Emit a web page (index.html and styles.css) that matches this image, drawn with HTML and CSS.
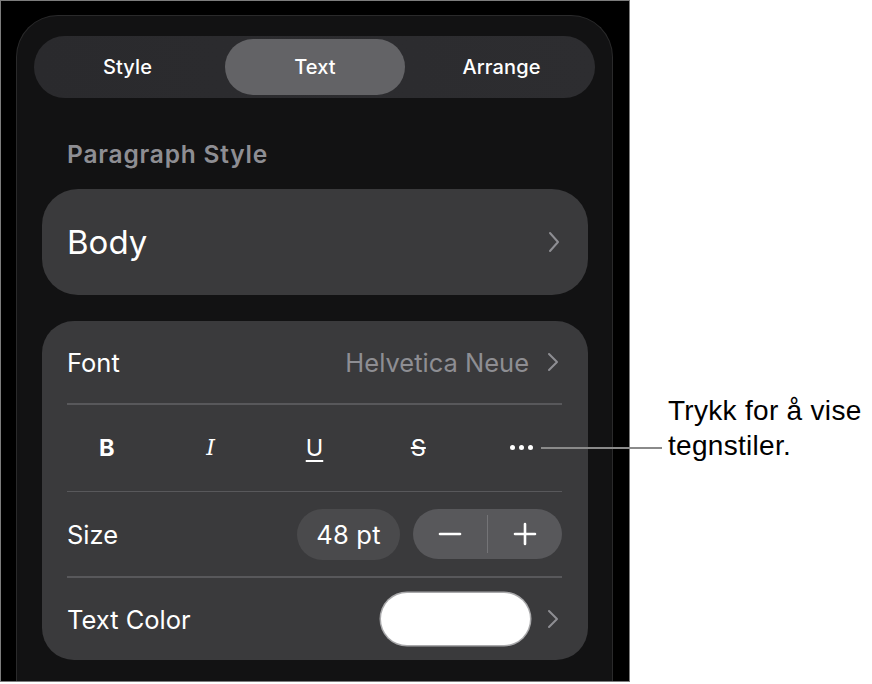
FILE: index.html
```html
<!DOCTYPE html>
<html lang="nb">
<head>
<meta charset="utf-8">
<title>Text format</title>
<link rel="stylesheet" href="styles.css">
</head>
<body>
<div class="stage">
  <div class="frame">
    <div class="panel">
      <div class="segmented">
        <div class="seg">Style</div>
        <div class="seg seg-active">Text</div>
        <div class="seg">Arrange</div>
      </div>

      <div class="section-title">Paragraph Style</div>

      <div class="card card-body">
        <span class="body-label">Body</span>
        <svg class="chev chev-lg" viewBox="0 0 12 22" width="12" height="22"><path d="M2 2 L10 11 L2 20"/></svg>
      </div>

      <div class="card card-list">
        <div class="row row-font">
          <span class="label">Font</span>
          <span class="value">Helvetica Neue</span>
          <svg class="chev" viewBox="0 0 12 20" width="12" height="20"><path d="M2 2 L10 10 L2 18"/></svg>
        </div>
        <div class="sep"></div>
        <div class="row row-styles">
          <span class="sty sty-b">B</span>
          <span class="sty sty-i">I</span>
          <span class="sty sty-u">U</span>
          <span class="sty sty-s">S</span>
          <span class="sty sty-more"><i></i><i></i><i></i></span>
        </div>
        <div class="sep"></div>
        <div class="row row-size">
          <span class="label">Size</span>
          <span class="size-pill">48 pt</span>
          <div class="stepper">
            <span class="step">
              <svg viewBox="0 0 24 24" width="24" height="24"><path d="M2 12 H22"/></svg>
            </span>
            <span class="step-div"></span>
            <span class="step">
              <svg viewBox="0 0 24 24" width="24" height="24"><path d="M2 12 H22 M12 2 V22"/></svg>
            </span>
          </div>
        </div>
        <div class="sep"></div>
        <div class="row row-color">
          <span class="label">Text Color</span>
          <span class="swatch"></span>
          <svg class="chev" viewBox="0 0 12 20" width="12" height="20"><path d="M2 2 L10 10 L2 18"/></svg>
        </div>
      </div>
    </div>
  </div>

  <div class="callout">
    <span class="callout-line"></span>
    <p class="callout-text">Trykk for å vise<br>tegnstiler.</p>
  </div>
</div>
</body>
</html>
```

FILE: styles.css
```css
* { box-sizing: border-box; }

html, body {
  margin: 0;
  padding: 0;
  background: #ffffff;
}

body {
  font-family: Inter, "Noto Sans", sans-serif;
  -webkit-font-smoothing: antialiased;
}

.stage {
  position: relative;
  width: 872px;
  height: 684px;
}

.frame {
  width: 630px;
  height: 682px;
  border: 1px solid #7c7c7c;
  background: #000000;
  padding: 14px 16px 0 15px;
  overflow: hidden;
}

.panel {
  width: 597px;
  height: 680px;
  background: #121213;
  border: 1px solid #2a2a2b;
  border-bottom: none;
  border-radius: 42px 42px 0 0;
  padding: 20px 17px 0 17px;
}

/* segmented control */
.segmented {
  display: grid;
  grid-template-columns: repeat(3, 1fr);
  height: 62px;
  padding: 3px 0;
  border-radius: 31px;
  background: linear-gradient(90deg, #2a2a2d 0%, #2d2d30 100%);
}

.seg {
  display: flex;
  align-items: center;
  justify-content: center;
  color: #ffffff;
  font-size: 20px;
  font-weight: 500;
  letter-spacing: 0.1px;
  border-radius: 28px;
}

.seg-active {
  background: #636366;
  margin: 0 3px 0 4px;
}

.section-title {
  margin: 42px 0 0 33px;
  height: 28px;
  line-height: 28px;
  font-size: 24.5px;
  font-weight: 600;
  color: #8e8e93;
  letter-spacing: 0.8px;
}

.card {
  margin: 0 7px 0 8px;
  background: #3a3a3c;
}

.card-body {
  margin-top: 21px;
  height: 106px;
  border-radius: 36px;
  display: flex;
  align-items: center;
  justify-content: space-between;
  padding: 0 28px 0 25px;
}

.body-label {
  color: #ffffff;
  font-size: 33px;
  font-weight: 400;
  letter-spacing: 0;
}

.chev path {
  fill: none;
  stroke: #8e8e93;
  stroke-width: 2;
  stroke-linecap: round;
  stroke-linejoin: round;
}

.card-list {
  margin-top: 26px;
  height: 339px;
  border-radius: 32px;
  padding: 0 26px 0 25px;
}

.row {
  display: flex;
  align-items: center;
}

.label {
  color: #ffffff;
  font-size: 25.5px;
  letter-spacing: 0;
}

.sep {
  height: 1.5px;
  background: #58585b;
}

.row-font {
  height: 82px;
}

.row-font .value {
  margin-left: auto;
  margin-right: 18px;
  color: #8e8e93;
  font-size: 25.5px;
  letter-spacing: 0;
}

.row-font .chev { margin-right: 3px; }

.row-styles {
  height: 86px;
  display: grid;
  grid-template-columns: repeat(5, 1fr);
  margin: 0 -12px;
  align-items: center;
}

.sty {
  display: flex;
  justify-content: center;
  align-items: center;
  color: #ffffff;
  font-size: 23.5px;
  line-height: 28px;
  height: 28px;
}

.sty-b { font-weight: 700; }

.sty-i {
  font-family: "DejaVu Serif", "Liberation Serif", serif;
  font-style: italic;
  font-size: 22px;
  font-weight: 400;
}

.sty-u {
  text-decoration: underline;
  text-decoration-thickness: 2px;
  text-underline-offset: 4px;
  font-weight: 400;
}

.sty-s {
  text-decoration: line-through;
  text-decoration-thickness: 2px;
  font-weight: 400;
}

.sty-more {
  gap: 4px;
  padding-right: 2px;
}

.sty-more i {
  width: 5px;
  height: 5px;
  border-radius: 50%;
  background: #ffffff;
}

.row-size {
  height: 84px;
}

.size-pill {
  margin-left: auto;
  width: 103px;
  height: 51px;
  border-radius: 26px;
  background: #4a4a4c;
  color: #ffffff;
  font-size: 25.5px;
  display: flex;
  align-items: center;
  justify-content: center;
  letter-spacing: 0.2px;
}

.stepper {
  margin-left: 13px;
  width: 149px;
  height: 50px;
  border-radius: 25px;
  background: #58585b;
  display: flex;
  align-items: center;
}

.step {
  flex: 1;
  display: flex;
  justify-content: center;
  align-items: center;
}

.step svg path {
  fill: none;
  stroke: #ffffff;
  stroke-width: 2.6;
  stroke-linecap: round;
}

.step-div {
  width: 1.5px;
  height: 38px;
  background: #747477;
}

.row-color {
  height: 83px;
}

.swatch {
  margin-left: auto;
  margin-right: 17px;
  width: 149px;
  height: 52px;
  border-radius: 26px;
  background: #ffffff;
  box-shadow: 0 0 0 1.5px #a9a9ab;
}

.row-color .chev { margin-right: 3px; }

/* callout */
.callout {
  position: absolute;
  left: 0;
  top: 0;
  width: 872px;
  height: 684px;
  pointer-events: none;
}

.callout-line {
  position: absolute;
  left: 541px;
  top: 447px;
  width: 121px;
  height: 2px;
  background: #8a8a8a;
}

.callout-text {
  position: absolute;
  left: 668px;
  top: 393px;
  margin: 0;
  font-family: "Liberation Sans", Arial, sans-serif;
  font-size: 28px;
  letter-spacing: 0.3px;
  line-height: 35px;
  color: #000000;
}
```
